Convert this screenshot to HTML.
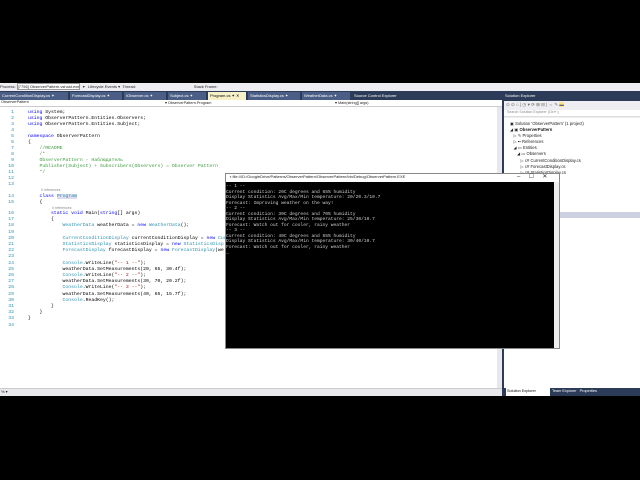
<!DOCTYPE html>
<html><head><meta charset="utf-8"><style>
*{margin:0;padding:0;box-sizing:border-box}
body{width:640px;height:480px;background:#000;position:relative;overflow:hidden;font-family:"Liberation Sans",sans-serif}
.a{position:absolute;white-space:pre}
.code{font-family:"Liberation Mono",monospace;font-size:4.8px;color:#000;line-height:6px}
.ln{font-family:"Liberation Mono",monospace;font-size:4.8px;color:#2b91af;line-height:6px;text-align:right;width:14px}
.k{color:#0000ff}.t{color:#2b91af}.c{color:#3c9a3c}.s{color:#a31515}
.cl{font-size:3.5px;color:#888}
.con{font-family:"Liberation Mono",monospace;font-size:4.6px;color:#ccc;line-height:5.5px}
.sm{font-size:4px;color:#222}
.tab{position:absolute;top:92px;height:8px;background:#4b5f86;color:#fff;font-size:4px;padding:1px 2px}
.tr{font-size:4.2px;color:#222;line-height:6.1px}
</style></head><body>
<div class="a" style="left:0;top:83px;width:640px;height:312px;background:#eeeef2"></div>
<div class="a sm" style="left:0;top:84px">Process: <span style="background:#fff;border:1px solid #999">[7756] ObserverPattern.vshost.exe</span>  ▾   Lifecycle Events ▾  Thread:                                                    Stack Frame:</div>
<div class="a" style="left:0;top:91px;width:502px;height:10px;background:#2b3b58"></div>
<div class="tab" style="left:0;width:68px">CurrentConditionDisplay.cs ✦</div>
<div class="tab" style="left:70px;width:52px">ForecastDisplay.cs ✦</div>
<div class="tab" style="left:124px;width:42px">IObserver.cs ✦</div>
<div class="tab" style="left:168px;width:38px">Subject.cs ✦</div>
<div class="tab" style="left:208px;width:38px;background:#f5f0c8;color:#000">Program.cs ✦ ✕</div>
<div class="tab" style="left:248px;width:52px">StatisticsDisplay.cs ✦</div>
<div class="tab" style="left:302px;width:48px">WeatherData.cs ✦</div>
<div class="tab" style="left:352px;width:52px;background:#2b3b58">Source Control Explorer</div>
<div class="a" style="left:0;top:100px;width:502px;height:7px;background:#fff;border-bottom:1px solid #ccc"></div>
<div class="a sm" style="left:1px;top:100px;font-size:3.8px">ObserverPattern</div>
<div class="a sm" style="left:165px;top:100px;font-size:3.8px">▾ ObserverPattern.Program</div>
<div class="a sm" style="left:335px;top:100px;font-size:3.8px">▾ Main(string[] args)</div>
<div class="a" style="left:0;top:107px;width:497px;height:281px;background:#fff"></div>
<div class="a" style="left:497px;top:107px;width:6px;height:281px;background:#e8e8ec"></div>
<div class="a" style="left:502px;top:91px;width:2px;height:305px;background:#2b3b58"></div>
<div class="a ln" style="left:0;top:110px">1
2
3
4
5
6
7
8
9
10
11
12
13</div>
<div class="a code" style="left:28px;top:110px"><span class="k">using</span> System;
<span class="k">using</span> ObserverPattern.Entities.Observers;
<span class="k">using</span> ObserverPattern.Entities.Subject;

<span class="k">namespace</span> ObserverPattern
{
    <span class="c">//README</span>
    <span class="c">/*</span>
    <span class="c">ObserverPattern - Наблюдатель</span>
    <span class="c">Publisher(Subject) + Subscribers(Observers) = Observer Pattern</span>
    <span class="c">*/</span>

</div>
<div class="a cl" style="left:41px;top:188px">0 references</div>
<div class="a ln" style="left:0;top:194px">14
15</div>
<div class="a code" style="left:28px;top:194px">    <span class="k">class</span> <span class="t" style="background:#dde">Program</span>
    {</div>
<div class="a cl" style="left:52px;top:206px">0 references</div>
<div class="a ln" style="left:0;top:211px;line-height:6.2px">16
17
18
19
20
21
22
23
24
25
26
27
28
29
30
31
32
33
34</div>
<div class="a code" style="left:28px;top:211px;line-height:6.2px">        <span class="k">static void</span> Main(<span class="k">string</span>[] args)
        {
            <span class="t">WeatherData</span> weatherData = <span class="k">new</span> <span class="t">WeatherData</span>();

            <span class="t">CurrentConditionDisplay</span> currentConditionDisplay = <span class="k">new</span> <span class="t">CurrentCon</span>
            <span class="t">StatisticsDisplay</span> statisticsDisplay = <span class="k">new</span> <span class="t">StatisticsDisp</span>
            <span class="t">ForecastDisplay</span> forecastDisplay = <span class="k">new</span> <span class="t">ForecastDisplay</span>(we

            <span class="t">Console</span>.WriteLine(<span class="s">"-- 1 --"</span>);
            weatherData.SetMeasurements(20, 65, 30.4f);
            <span class="t">Console</span>.WriteLine(<span class="s">"-- 2 --"</span>);
            weatherData.SetMeasurements(30, 70, 20.2f);
            <span class="t">Console</span>.WriteLine(<span class="s">"-- 3 --"</span>);
            weatherData.SetMeasurements(40, 65, 15.7f);
            <span class="t">Console</span>.ReadKey();
        }
    }
}
</div>
<div class="a" style="left:0;top:388px;width:502px;height:8px;background:#e8e8ec;border-top:1px solid #ccc"></div>
<div class="a sm" style="left:1px;top:389px">% ▾</div>
<div class="a" style="left:504px;top:91px;width:136px;height:10px;background:#2b3b58"></div>
<div class="a" style="left:505px;top:93px;font-size:4px;color:#fff">Solution Explorer</div>
<div class="a" style="left:504px;top:101px;width:136px;height:9px;background:#eeeef2"></div>
<div class="a" style="left:506px;top:102px;font-size:4.5px;color:#666">⊙ ⊙ ⌂ | ◷ ▾ ⟳ ⊞ ⊟ | ⇔ ✎ <span style="background:#ffe680">▬</span></div>
<div class="a" style="left:504px;top:110px;width:136px;height:7px;background:#fff;border-bottom:1px solid #ddd"></div>
<div class="a" style="left:507px;top:110px;font-size:3.6px;color:#888">Search Solution Explorer (Ctrl+;)</div>
<div class="a" style="left:504px;top:118px;width:136px;height:270px;background:#fff"></div>
<div class="a" style="left:557px;top:212px;width:83px;height:6px;background:#cdd0e0"></div>
<div class="a tr" style="left:510px;top:121px">▣ Solution 'ObserverPattern' (1 project)
◢ ▣ <b>ObserverPattern</b>
   ▷ ✎ Properties
   ▷ ▪▪ References
   ◢ ▭ Entities
      ◢ ▭ Observers
         ▷ c# CurrentConditionDisplay.cs
         ▷ c# ForecastDisplay.cs
         ▷ c# StatisticsDisplay.cs
                               ata.cs</div>
<div class="a" style="left:504px;top:388px;width:136px;height:8px;background:#2b3b58"></div>
<div class="a" style="left:506px;top:388px;width:44px;height:8px;background:#fff;font-size:3.8px;color:#000;padding:1px">Solution Explorer</div>
<div class="a" style="left:552px;top:389px;font-size:3.8px;color:#fff">Team Explorer   Properties</div>
<div class="a" style="left:225px;top:173px;width:335px;height:176px;background:#fff;border:1px solid #888"></div>
<div class="a" style="left:230px;top:174px;font-size:4px;color:#222">▪ file:///D:/GoogleDrive/Patterns/ObserverPattern/ObserverPattern/bin/Debug/ObserverPattern.EXE</div>
<div class="a" style="left:517px;top:173px;font-size:6px;color:#333">–     ☐     ✕</div>
<div class="a" style="left:226px;top:182px;width:328px;height:166px;background:#000"></div>
<div class="a" style="left:554px;top:182px;width:5px;height:166px;background:#eee"></div>
<div class="a con" style="left:226px;top:184px">-- 1 --
Current condition: 20C degrees and 65% humidity
Display Statistics Avg/Max/Min temperature: 20/20.3/10.7
Forecast: Improving weather on the way!
-- 2 --
Current condition: 30C degrees and 70% humidity
Display Statistics Avg/Max/Min temperature: 25/30/10.7
Forecast: Watch out for cooler, rainy weather
-- 3 --
Current condition: 40C degrees and 65% humidity
Display Statistics Avg/Max/Min temperature: 30/40/10.7
Forecast: Watch out for cooler, rainy weather
_</div>
</body></html>
